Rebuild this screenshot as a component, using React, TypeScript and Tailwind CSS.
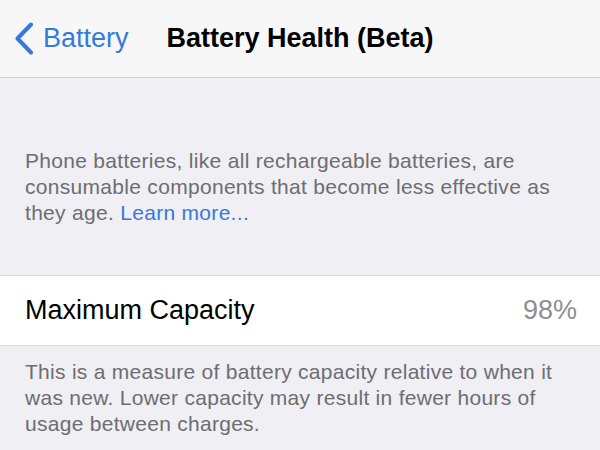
export default function App() {
  return (
    <div
      className="w-[600px] h-[450px] overflow-hidden bg-[#efeff4]"
      style={{ fontFamily: '"Liberation Sans", Arial, sans-serif' }}
    >
      {/* Navigation bar */}
      <div className="relative h-[78px] bg-[#f7f7f7] border-b border-[#cfcfd3] flex items-center justify-center">
        <div className="absolute left-[14px] top-0 h-full flex items-center gap-[9px] text-[#3479db]">
          <svg width="20" height="33" viewBox="0 0 20 33" fill="none">
            <path
              d="M17 2.5 L3.5 16.5 L17 30.5"
              stroke="currentColor"
              strokeWidth="4"
              strokeLinecap="round"
              strokeLinejoin="round"
            />
          </svg>
          <span className="text-[27px] leading-none">Battery</span>
        </div>
        <h1 className="text-[27px] font-bold text-black leading-none">Battery Health (Beta)</h1>
      </div>

      {/* Intro text */}
      <p className="pt-[70px] px-[25px] text-[21px] leading-[26px] tracking-[0.3px] text-[#6d6d72]">
        Phone batteries, like all rechargeable batteries, are consumable components that become less
        effective as they age. <span className="text-[#3479db]">Learn more...</span>
      </p>

      {/* Capacity row */}
      <div className="mt-[49px] h-[71px] bg-white border-y border-[#dcdce0] flex items-center justify-between pl-[25px] pr-[23px]">
        <span className="text-[27px] text-black">Maximum Capacity</span>
        <span className="text-[27px] text-[#8e8e93]">98%</span>
      </div>

      {/* Footer text */}
      <p className="pt-[13px] px-[25px] text-[21px] leading-[26px] tracking-[0.28px] text-[#6d6d72]">
        This is a measure of battery capacity relative to when it was new. Lower capacity may result
        in fewer hours of usage between charges.
      </p>
    </div>
  );
}
